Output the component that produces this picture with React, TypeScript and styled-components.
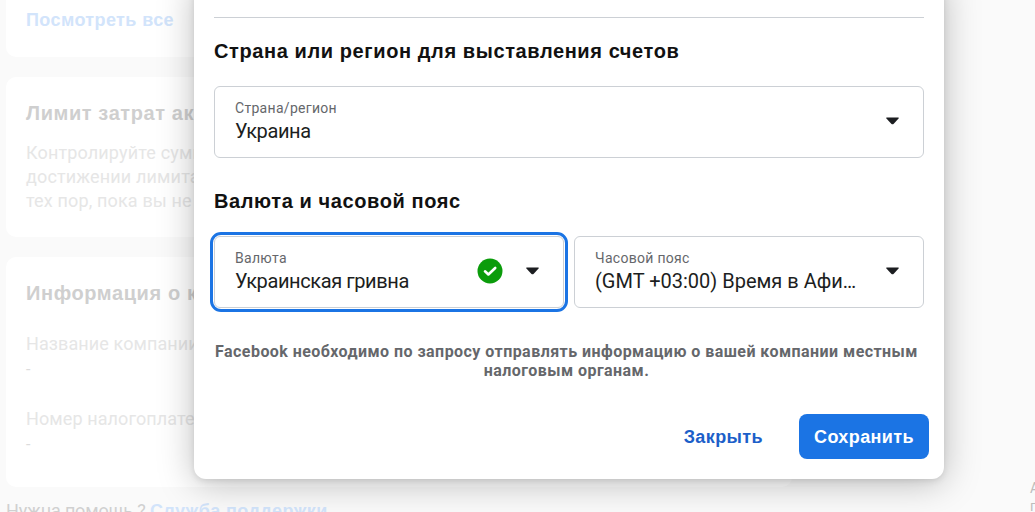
import React from 'react';
import styled, { createGlobalStyle } from 'styled-components';

const Global = createGlobalStyle`
  html, body { margin: 0; padding: 0; background: #fafafa; }
  * { box-sizing: border-box; }
`;

const Page = styled.div`
  position: relative;
  width: 1035px;
  height: 512px;
  overflow: hidden;
  background: #fafafa;
  font-family: Roboto, "Liberation Sans", sans-serif;
`;

const LeftColumn = styled.div`
  width: 786px;
  margin-left: 6px;
  margin-top: -60px;
  display: flex;
  flex-direction: column;
  gap: 20px;
`;

const Card = styled.section<{ $h: number }>`
  height: ${p => p.$h}px;
  background: #fff;
  border-radius: 10px;
  padding: 20px;
  display: flex;
  flex-direction: column;
`;

const ViewAll = styled.a`
  margin-top: 48px;
  font: 700 18px/24px "Liberation Sans", sans-serif;
  letter-spacing: 0.4px;
  color: #d2e4fb;
`;

const CardTitle = styled.h3`
  margin: 4px 0 0;
  font: 700 20px/24px "Liberation Sans", sans-serif;
  letter-spacing: 0.6px;
  color: #cfcfcf;
`;

const CardText = styled.p`
  margin: 16px 0 0;
  font: 400 18px/24px Roboto, sans-serif;
  letter-spacing: 0.15px;
  color: #e6e6e6;
  white-space: nowrap;
`;

const FieldName = styled.div<{ $top: number }>`
  margin-top: ${p => p.$top}px;
  font: 400 18px/24px Roboto, sans-serif;
  letter-spacing: 0.1px;
  color: #e6e6e6;
`;

const FieldDash = styled.div`
  margin-top: 2px;
  font: 400 16px/24px Roboto, sans-serif;
  color: #dcdcdc;
`;

const Footer = styled.div`
  margin: -8px 0 0 0;
  font: 400 18px/24px Roboto, sans-serif;
  letter-spacing: -0.15px;
  color: #d0d0d0;
  white-space: nowrap;
`;

const FooterLink = styled.a`
  font-family: "Liberation Sans", sans-serif;
  font-weight: 700;
  letter-spacing: 0.4px;
  color: #d2e4fb;
`;

const SideNote = styled.div`
  position: absolute;
  left: 1030px;
  top: 479px;
  font: 400 14px/18px Roboto, sans-serif;
  color: #bdbdbd;
`;

const Modal = styled.div`
  position: absolute;
  left: 194px;
  top: -20px;
  width: 750px;
  height: 499px;
  background: #fff;
  border-radius: 0 0 12px 12px;
  box-shadow: 0 4px 36px rgba(0, 0, 0, 0.26), 0 2px 6px rgba(0, 0, 0, 0.1);
  padding: 37px 20px 20px;
  display: flex;
  flex-direction: column;
`;

const Divider = styled.hr`
  margin: 0;
  border: 0;
  height: 1px;
  background: #ccd0d5;
`;

const SectionTitle = styled.h2<{ $top: number }>`
  margin: ${p => p.$top}px 0 0;
  font: 700 20px/24px "Liberation Sans", sans-serif;
  letter-spacing: 0.6px;
  color: #111;
  white-space: nowrap;
`;

const SelectRow = styled.div`
  display: flex;
  gap: 10px;
  margin-top: 23px;
`;

const SelectBox = styled.div<{ $focused?: boolean }>`
  position: relative;
  flex: 1 1 0;
  min-width: 0;
  height: 72px;
  border: 1px solid #ccd0d5;
  border-radius: 6px;
  padding: 11px 20px 0;
  display: flex;
  align-items: center;
  gap: 28px;
  ${p => p.$focused && `
    &::after {
      content: '';
      position: absolute;
      inset: -5px;
      border: 3px solid #1b74e4;
      border-radius: 11px;
    }
  `}
`;

const SelectText = styled.div`
  flex: 1 1 0;
  min-width: 0;
  margin-top: -11px;
`;

const SelectLabel = styled.div`
  font: 400 14px/18px Roboto, sans-serif;
  letter-spacing: 0.3px;
  margin: -2px 0 1px;
  color: #65676b;
`;

const SelectValue = styled.div<{ $spacing?: number }>`
  font: 400 20px/26px Roboto, sans-serif;
  letter-spacing: ${p => p.$spacing ?? -0.4}px;
  color: #1c1e21;
  white-space: nowrap;
  overflow: hidden;
  text-overflow: ellipsis;
`;

const Icons = styled.div`
  display: flex;
  align-items: center;
  margin-top: -13px;
  margin-right: 4px;
  gap: 23px;
`;

const Note = styled.p`
  margin: 34px 5px 0 0;
  font: 700 16px/19px Roboto, sans-serif;
  letter-spacing: 0.45px;
  color: #65676b;
  text-align: center;
  white-space: nowrap;
`;

const Actions = styled.div`
  display: flex;
  justify-content: flex-end;
  align-items: center;
  gap: 36px;
  margin: 34px -5px 0 0;
`;

const CloseButton = styled.button`
  border: 0;
  padding: 0;
  background: none;
  font: 700 18px/24px "Liberation Sans", sans-serif;
  letter-spacing: 0.4px;
  color: #1c5fc9;
`;

const SaveButton = styled.button`
  width: 130px;
  height: 45px;
  border: 0;
  border-radius: 8px;
  background: #1b74e4;
  color: #fff;
  font: 700 18px/24px "Liberation Sans", sans-serif;
  letter-spacing: 0.4px;
`;

const Caret = () => (
  <svg width="13" height="8" viewBox="0 0 13 8" aria-hidden="true">
    <path d="M1 0.5h11c.7 0 1 .6.6 1.1L7.5 6.9c-.5.5-1.4.5-2 0L.4 1.6C0 1.1.3.5 1 .5z" fill="#1c1e21" />
  </svg>
);

const Check = () => (
  <svg width="26" height="26" viewBox="0 0 26 26" aria-hidden="true">
    <circle cx="13" cy="13" r="12.5" fill="#0b9c0b" />
    <path d="M8 13.3l3.4 3.2L18.2 10" fill="none" stroke="#fff" strokeWidth="2.6" strokeLinecap="round" strokeLinejoin="round" />
  </svg>
);

export default function App() {
  return (
    <Page>
      <Global />
      <LeftColumn>
        <Card $h={117}>
          <ViewAll>Посмотреть все</ViewAll>
        </Card>
        <Card $h={160}>
          <CardTitle>Лимит затрат аккаунта</CardTitle>
          <CardText>
            Контролируйте сумму расходов<br />
            достижении лимита показ рекламы<br />
            тех пор, пока вы не измените его
          </CardText>
        </Card>
        <Card $h={230}>
          <CardTitle>Информация о компании</CardTitle>
          <FieldName $top={27}>Название компании</FieldName>
          <FieldDash>-</FieldDash>
          <FieldName $top={25}>Номер налогоплательщика</FieldName>
          <FieldDash>-</FieldDash>
        </Card>
        <Footer>Нужна помощь ? <FooterLink>Служба поддержки</FooterLink></Footer>
      </LeftColumn>
      <SideNote>А<br />п</SideNote>
      <Modal>
        <Divider />
        <SectionTitle $top={21}>Страна или регион для выставления счетов</SectionTitle>
        <SelectRow>
          <SelectBox>
            <SelectText>
              <SelectLabel>Страна/регион</SelectLabel>
              <SelectValue>Украина</SelectValue>
            </SelectText>
            <Icons><Caret /></Icons>
          </SelectBox>
        </SelectRow>
        <SectionTitle $top={31}>Валюта и часовой пояс</SectionTitle>
        <SelectRow>
          <SelectBox $focused>
            <SelectText>
              <SelectLabel>Валюта</SelectLabel>
              <SelectValue>Украинская гривна</SelectValue>
            </SelectText>
            <Icons><Check /><Caret /></Icons>
          </SelectBox>
          <SelectBox>
            <SelectText>
              <SelectLabel>Часовой пояс</SelectLabel>
              <SelectValue $spacing={0}>(GMT +03:00) Время в Афинах</SelectValue>
            </SelectText>
            <Icons><Caret /></Icons>
          </SelectBox>
        </SelectRow>
        <Note>
          Facebook необходимо по запросу отправлять информацию о вашей компании местным<br />
          налоговым органам.
        </Note>
        <Actions>
          <CloseButton>Закрыть</CloseButton>
          <SaveButton>Сохранить</SaveButton>
        </Actions>
      </Modal>
    </Page>
  );
}
